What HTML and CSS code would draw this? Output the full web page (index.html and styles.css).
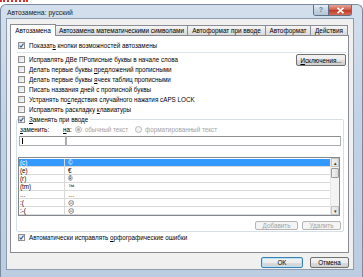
FILE: index.html
```html
<!DOCTYPE html>
<html lang="ru">
<head>
    <meta charset="UTF-8">
    <title>Автозамена: русский</title>
    <link rel="stylesheet" href="styles.css">
</head>
<body>
    <div class="redmark"></div>
    <div class="window">
        <div class="titlebar">
            <span class="title">Автозамена: русский</span>
            <div class="caption-buttons">
                <span class="cap-help">?</span>
                <span class="cap-close">
                    <svg width="9" height="7" viewBox="0 0 9 7"><path d="M1.5 0.8 L7.5 6.2 M7.5 0.8 L1.5 6.2" stroke="#fff" stroke-width="1.6"/></svg>
                </span>
            </div>
        </div>
        <div class="client">
            <div class="tabs">
                <div class="tab active t1">Автозамена</div>
                <div class="tab t2">Автозамена математическими символами</div>
                <div class="tab t3">Автоформат при вводе</div>
                <div class="tab t4">Автоформат</div>
                <div class="tab t5">Действия</div>
            </div>
            <div class="panel">
                <div class="check"><span class="box on"><svg width="5" height="5" viewBox="0 0 5 5"><path d="M0.6 2.6 L2 4.1 L4.5 0.7" stroke="#3b5f9e" stroke-width="1.1" fill="none"/></svg></span><span>Показат<u>ь</u> кнопки возможностей автозамены</span></div>
                <div class="sep"></div>
                <div class="opts">
                    <div class="opts-list">
                        <div class="check"><span class="box"></span><span>Исправлять <u>Д</u>Ве ПРописные буквы в начале слова</span></div>
                        <div class="check"><span class="box"></span><span>Делать первые буквы <u>п</u>редложений прописными</span></div>
                        <div class="check"><span class="box"></span><span>Делать первые буквы <u>я</u>чеек таблиц прописными</span></div>
                        <div class="check"><span class="box"></span><span>Писать названия <u>д</u>ней с прописной буквы</span></div>
                        <div class="check"><span class="box"></span><span>Устранять по<u>с</u>ледствия случайного нажатия cAPS LOCK</span></div>
                        <div class="check"><span class="box"></span><span>Исправлять раскладку <u>к</u>лавиатуры</span></div>
                    </div>
                    <button class="btn btn-exc"><u>И</u>сключения...</button>
                </div>
                <fieldset class="group">
                    <legend><span class="check legend-check"><span class="box on"><svg width="5" height="5" viewBox="0 0 5 5"><path d="M0.6 2.6 L2 4.1 L4.5 0.7" stroke="#3b5f9e" stroke-width="1.1" fill="none"/></svg></span><span><u>З</u>аменять при вводе</span></span></legend>
                    <div class="replace-labels">
                        <span class="lbl-from"><u>з</u>аменить:</span>
                        <span class="lbl-to"><u>н</u>а:</span>
                        <span class="radio sel"></span><span class="dim">обычный текст</span>
                        <span class="radio second"></span><span class="dim">форматированный текст</span>
                    </div>
                    <div class="replace-inputs">
                        <div class="input"><span class="caret"></span></div>
                        <div class="input"></div>
                    </div>
                    <div class="list">
                        <div class="rows">
                            <div class="row selected"><span class="c1">(c)</span><span class="c2">©</span></div>
                            <div class="row"><span class="c1">(e)</span><span class="c2">€</span></div>
                            <div class="row"><span class="c1">(r)</span><span class="c2">®</span></div>
                            <div class="row"><span class="c1">(tm)</span><span class="c2">™</span></div>
                            <div class="row"><span class="c1">...</span><span class="c2">…</span></div>
                            <div class="row"><span class="c1">:(</span><span class="c2">☹</span></div>
                            <div class="row"><span class="c1">:-(</span><span class="c2">☹</span></div>
                        </div>
                        <div class="scrollbar">
                            <span class="sb-btn">&#9652;</span>
                            <span class="sb-thumb"></span>
                            <span class="sb-space"></span>
                            <span class="sb-btn">&#9662;</span>
                        </div>
                    </div>
                    <div class="group-buttons">
                        <button class="btn disabled btn-add">Добавить</button>
                        <button class="btn disabled btn-del">Удалить</button>
                    </div>
                </fieldset>
                <div class="check auto-check"><span class="box on"><svg width="5" height="5" viewBox="0 0 5 5"><path d="M0.6 2.6 L2 4.1 L4.5 0.7" stroke="#3b5f9e" stroke-width="1.1" fill="none"/></svg></span><span>Автоматически исправлять <u>о</u>рфографические ошибки</span></div>
            </div>
            <div class="footer">
                <button class="btn btn-ok">OK</button>
                <button class="btn btn-cancel">Отмена</button>
            </div>
        </div>
    </div>
</body>
</html>
```

FILE: styles.css
```css
* {
    box-sizing: border-box;
}

body {
    margin: 0;
    width: 363px;
    height: 277px;
    overflow: hidden;
    background-color: #fff;
    color: #000;
    font-family: 'Liberation Sans', Arial, sans-serif;
    font-size: 6.3px;
}

u {
    text-decoration-thickness: 0.6px;
    text-underline-offset: 1px;
}

.redmark {
    width: 28px;
    height: 2px;
    border-top: 2px dotted #e0302a;
    margin-bottom: 2px;
}

/* window frame */
.window {
    height: 273px;
    border: 1px solid #7a8ba0;
    border-bottom: none;
    border-radius: 6px 6px 0 0;
    padding: 0 8px 7px 5px;
    background: linear-gradient(to bottom, #d3dfec, #c3d3e6 40%, #bccde1);
    display: flex;
    flex-direction: column;
}

.titlebar {
    height: 13px;
    display: flex;
    justify-content: space-between;
    align-items: flex-start;
}

.title {
    margin: 4px 0 0 1px;
    font-size: 6.8px;
    color: #1e1e1e;
}

.caption-buttons {
    display: flex;
    margin-right: 2px;
    border: 1px solid #5f6f84;
    border-top: none;
    border-radius: 0 0 3px 3px;
    overflow: hidden;
    height: 11px;
}

.cap-help {
    width: 15px;
    background: linear-gradient(to bottom, #e8eef6, #c4d2e3 50%, #b4c6dc);
    color: #6b7b8f;
    font-size: 7px;
    font-weight: bold;
    text-align: center;
    line-height: 10px;
    border-right: 1px solid #5f6f84;
}

.cap-close {
    width: 22px;
    background: linear-gradient(to bottom, #e6a496, #cf5a47 50%, #c13c28 55%, #d46a55);
    display: flex;
    align-items: center;
    justify-content: center;
}

.client {
    flex: 1;
    background-color: #f0f0f0;
    border: 1px solid #8e9cb0;
    padding: 5px 4px 0 3px;
    display: flex;
    flex-direction: column;
}

/* tabs */
.tabs {
    display: flex;
    align-items: flex-end;
    height: 11px;
    position: relative;
    z-index: 1;
}

.tab {
    height: 10px;
    border: 1px solid #898c95;
    border-bottom: none;
    margin-left: -1px;
    background: linear-gradient(to bottom, #f6f6f6, #e6e6e6 50%, #dadada);
    text-align: center;
    line-height: 9px;
    font-size: 6.4px;
    white-space: nowrap;
}

.tab.active {
    height: 12px;
    margin-bottom: -1px;
    margin-left: 0;
    background: #fff;
    line-height: 11px;
}

.t1 { width: 46px; }
.t2 { width: 133px; }
.t3 { width: 79px; }
.t4 { width: 46px; }
.t5 { width: 38px; }

.panel {
    height: 218px;
    background-color: #fff;
    border: 1px solid #898c95;
    padding: 4px 2px 0 5px;
}

.check {
    display: flex;
    align-items: center;
    height: 10px;
    margin-left: 2px;
    white-space: nowrap;
}

.box {
    width: 7px;
    height: 7px;
    margin-right: 4px;
    border: 1px solid #8f8f8f;
    background: linear-gradient(135deg, #dcdcdc, #fbfbfb);
    display: flex;
    align-items: center;
    justify-content: center;
    flex-shrink: 0;
}

.sep {
    height: 1px;
    margin: 2px 0 1px 1px;
    background-color: #dde5ee;
}

.opts {
    display: flex;
    justify-content: space-between;
    align-items: flex-start;
}

.btn {
    font-family: inherit;
    font-size: 6.3px;
    color: #000;
    padding: 0;
    border: 1px solid #707070;
    border-radius: 2px;
    background: linear-gradient(to bottom, #f2f2f2, #ebebeb 50%, #dddddd 51%, #cfcfcf);
    white-space: nowrap;
}

.btn-exc {
    width: 50px;
    height: 12px;
}

.btn.disabled {
    color: #a3a3a3;
    border-color: #b5b5b5;
    background: #f4f4f4;
}

/* replace group */
.group {
    margin: 0 2px 0 0;
    padding: 0 2px 1px 1px;
    border: 1px solid #d5dfe5;
    border-radius: 2px;
    min-width: 0;
}

.group legend {
    padding: 0 2px 0 0;
}

.legend-check {
    margin-left: 0;
}

.replace-labels {
    display: flex;
    align-items: center;
    height: 10px;
    white-space: nowrap;
}

.lbl-from {
    width: 43px;
    margin-left: 2px;
}

.lbl-to {
    margin-right: 3px;
}

.dim {
    color: #a3a3a3;
}

.radio {
    width: 7px;
    height: 7px;
    border: 1px solid #b8b8b8;
    border-radius: 50%;
    background: #f4f4f4;
    margin-right: 3px;
    display: flex;
    align-items: center;
    justify-content: center;
}

.radio.sel::after {
    content: '';
    width: 3px;
    height: 3px;
    border-radius: 50%;
    background: #b0b0b0;
}

.radio.second {
    margin-left: 7px;
}

.replace-inputs {
    display: grid;
    grid-template-columns: 47px 1fr;
    margin: 2px 0 0 1px;
    height: 10px;
}

.input {
    border: 1px solid #abadb3;
    border-top-color: #8e8f8f;
    background-color: #fff;
    padding: 1px 0 0 2px;
}

.caret {
    display: block;
    width: 1px;
    height: 6px;
    background-color: #000;
}

.list {
    margin-top: 11px;
    width: 322px;
    height: 59px;
    border: 1px solid #828790;
    display: flex;
    padding-top: 1px;
}

.rows {
    flex: 1;
}

.row {
    display: flex;
    height: 8px;
    line-height: 7px;
    border-bottom: 1px solid #dadada;
}

.row.selected {
    background-color: #3399ff;
    color: #fff;
}

.c1 {
    width: 46px;
    padding-left: 1px;
    border-right: 1px solid #d8d8d8;
}

.c2 {
    padding-left: 3px;
}

.scrollbar {
    width: 9px;
    margin-top: -1px;
    background: #f3f3f3;
    border-left: 1px solid #e6e6e6;
    display: flex;
    flex-direction: column;
}

.sb-btn {
    height: 9px;
    font-size: 5px;
    line-height: 9px;
    text-align: center;
    color: #333;
    border: 1px solid #c3c3c3;
    background: linear-gradient(to right, #f0f0f0, #e2e2e2);
}

.sb-thumb {
    height: 10px;
    margin-top: 1px;
    border: 1px solid #9a9a9a;
    border-radius: 1px;
    background: linear-gradient(to right, #f3f3f3, #dcdcdc);
}

.sb-space {
    flex: 1;
}

.group-buttons {
    display: flex;
    justify-content: flex-end;
    gap: 4px;
    margin-top: 5px;
    padding-right: 0;
}

.btn-add {
    width: 43px;
    height: 9px;
}

.btn-del {
    width: 39px;
    height: 9px;
}

.footer {
    display: flex;
    justify-content: flex-end;
    gap: 7px;
    margin-top: 4px;
}

.btn-ok {
    width: 42px;
    height: 11px;
    border-color: #3c7fb1;
    box-shadow: inset 0 0 0 1px #b8e2f8;
}

.btn-cancel {
    width: 39px;
    height: 11px;
}
```
